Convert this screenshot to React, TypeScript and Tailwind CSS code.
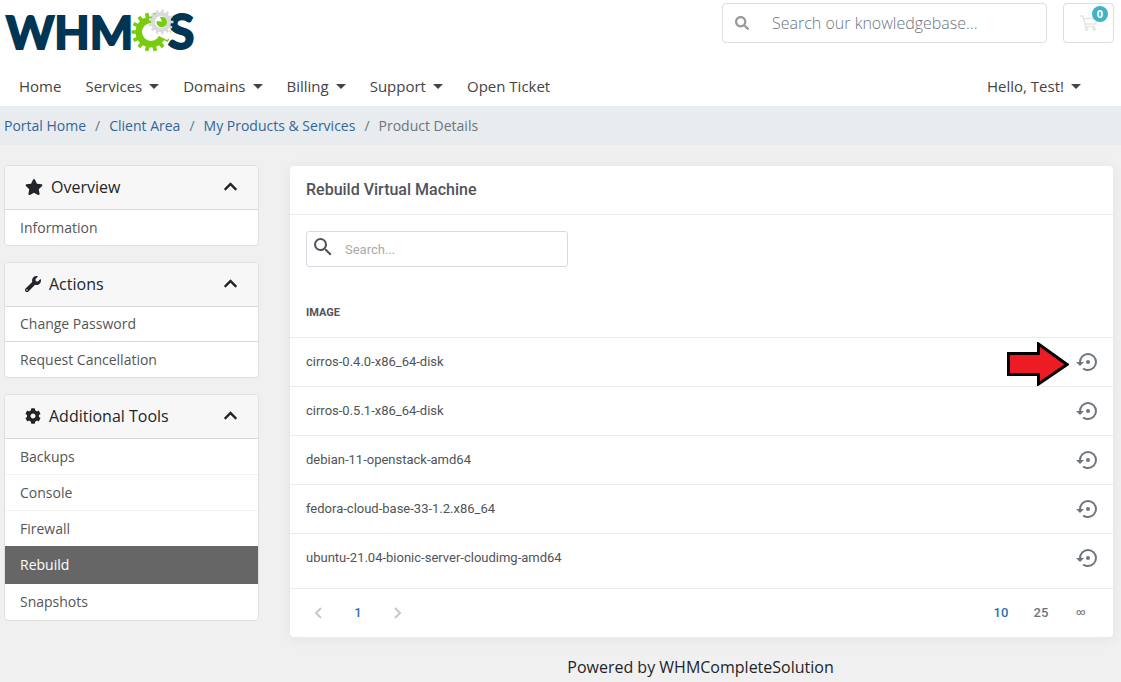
import React from "react";
import { FaSearch, FaStar, FaWrench, FaCog, FaChevronUp } from "react-icons/fa";

const RESTORE =
  "M12,3A9,9 0 0,0 3,12H0L4,16L8,12H5A7,7 0 0,1 12,5A7,7 0 0,1 19,12A7,7 0 0,1 12,19C10.5,19 9.09,18.5 7.94,17.7L6.5,19.14C8.04,20.3 9.94,21 12,21A9,9 0 0,0 21,12A9,9 0 0,0 12,3M14,12A2,2 0 0,0 12,10A2,2 0 0,0 10,12A2,2 0 0,0 12,14A2,2 0 0,0 14,12Z";
const MAGNIFY =
  "M9.5,3A6.5,6.5 0 0,1 16,9.5C16,11.11 15.41,12.59 14.44,13.73L14.71,14H15.5L20.5,19L19,20.5L14,15.5V14.71L13.73,14.44C12.59,15.41 11.11,16 9.5,16A6.5,6.5 0 0,1 3,9.5A6.5,6.5 0 0,1 9.5,3M9.5,5C7,5 5,7 5,9.5C5,12 7,14 9.5,14C12,14 14,12 14,9.5C14,7 12,5 9.5,5Z";

function gear(cx: number, cy: number, inner: number, outer: number, teeth: number) {
  const step = (Math.PI * 2) / teeth;
  const pts: string[] = [];
  for (let i = 0; i < teeth; i++) {
    const a = i * step;
    const corners: [number, number][] = [
      [-0.27, inner],
      [-0.2, outer],
      [0.2, outer],
      [0.27, inner],
    ];
    for (const [o, r] of corners) {
      pts.push(`${(cx + r * Math.cos(a + o * step)).toFixed(2)},${(cy + r * Math.sin(a + o * step)).toFixed(2)}`);
    }
  }
  return pts.join(" ");
}

function Logo() {
  return (
    <a href="#" aria-label="WHMCS" className="block">
      <svg width="200" height="60" viewBox="0 0 200 60" className="block">
        <g fill="#003553" stroke="#003553" strokeWidth="2" fontFamily="Lato" fontWeight="700">
          <text x="6" y="49" fontSize="46">WHM</text>
          <text x="168" y="49" fontSize="48">S</text>
        </g>
        <polygon points={gear(151, 32, 15.5, 19.5, 14)} fill="#77cc0b" />
        <circle cx="151" cy="32" r="9" fill="#fff" />
        <path d="M151 32 L167 40 L171 36 L167 20 Z" fill="#fff" />
        <polygon points={gear(161, 22, 10, 12.5, 13)} fill="#d9dadb" />
        <circle cx="161" cy="22" r="6" fill="#fff" />
        <path d="M162 21.5 L160 17 A5.3 5.3 0 1 1 156.5 21 Z" fill="#77cc0b" />
      </svg>
    </a>
  );
}

function Caret() {
  return <span className="border-x-[5px] border-t-[5px] border-x-transparent border-t-[#444]" />;
}

const NAV = [
  { label: "Home", menu: false },
  { label: "Services", menu: true },
  { label: "Domains", menu: true },
  { label: "Billing", menu: true },
  { label: "Support", menu: true },
  { label: "Open Ticket", menu: false },
];

function Header() {
  return (
    <header className="bg-white">
      <div className="flex h-[60px] items-start justify-between pr-[7px]">
        <Logo />
        <div className="flex gap-4 pt-[3px]">
          <label className="flex h-10 w-[325px] items-center rounded border border-[#ddd] pl-3">
            <FaSearch className="size-[14px] shrink-0 text-[#999]" />
            <input
              type="text"
              aria-label="Search our knowledgebase"
              placeholder="Search our knowledgebase..."
              className="ml-[23px] min-w-0 flex-1 bg-transparent text-base font-light outline-none placeholder:text-[#6c757d]"
            />
          </label>
          <button aria-label="Cart" className="relative flex h-10 w-[51px] items-center justify-center rounded border border-[#ddd]">
            <svg viewBox="0 0 18 16" className="h-4 w-[18px]" fill="none" stroke="#e6e6e6" strokeWidth="1.6">
              <path d="M0 1H3L5.5 11.5H15M3.5 3.5H17L15.5 9H5" />
              <circle cx="6.5" cy="14" r="1.2" />
              <circle cx="14" cy="14" r="1.2" />
            </svg>
            <span className="absolute top-[2px] right-[5px] flex size-4 items-center justify-center rounded-full bg-[#41b3c5] text-[11px] font-bold text-white">
              0
            </span>
          </button>
        </div>
      </div>
      <nav className="flex h-[46px] items-center justify-between pt-[7px] pr-10 pl-[19px] text-[15px] text-[#444]">
        <ul className="flex items-center gap-6">
          {NAV.map((n) => (
            <li key={n.label}>
              <a href="#" className="flex items-center gap-[7px]">
                {n.label}
                {n.menu && <Caret />}
              </a>
            </li>
          ))}
        </ul>
        <a href="#" className="flex items-center gap-[7px]">
          Hello, Test!
          <Caret />
        </a>
      </nav>
    </header>
  );
}

function Breadcrumb() {
  return (
    <nav aria-label="Breadcrumb" className="h-[39px] bg-[#e8ecef] px-1 text-sm leading-[39px] text-[#6c757d]">
      <ol className="flex gap-[9px]">
        {["Portal Home", "Client Area", "My Products & Services"].map((t) => (
          <li key={t} className="flex gap-[9px]">
            <a href="#" className="text-[#336699]">{t}</a>
            <span>/</span>
          </li>
        ))}
        <li>Product Details</li>
      </ol>
    </nav>
  );
}

type PanelProps = { title: string; icon: React.ReactNode; children: React.ReactNode };

function Panel({ title, icon, children }: PanelProps) {
  return (
    <section className="overflow-hidden rounded border border-[#dfdfdf] bg-white">
      <button className="flex h-11 w-full items-center gap-2 border-b border-[#d8d8d8] bg-[#f7f7f7] px-5 pb-[2px] text-base text-[#212529]">
        {icon}
        <span>{title}</span>
        <FaChevronUp className="ml-auto size-[15px]" />
      </button>
      <ul className="text-sm text-[#555]">{children}</ul>
    </section>
  );
}

function Sidebar() {
  return (
    <aside className="flex w-[255px] shrink-0 flex-col gap-4">
      <Panel title="Overview" icon={<FaStar className="h-4 w-[18px]" />}>
        <li><a href="#" className="block px-[15px] leading-[35px]">Information</a></li>
      </Panel>
      <Panel title="Actions" icon={<FaWrench className="size-4" />}>
        <li className="border-b border-[#d8d8d8]"><a href="#" className="block px-[15px] leading-[34px]">Change Password</a></li>
        <li><a href="#" className="block px-[15px] leading-[35px]">Request Cancellation</a></li>
      </Panel>
      <Panel title="Additional Tools" icon={<FaCog className="size-4" />}>
        <li className="border-b border-[#f2f2f2]"><a href="#" className="block px-[15px] leading-[35px]">Backups</a></li>
        <li className="border-b border-[#f2f2f2]"><a href="#" className="block px-[15px] leading-[35px]">Console</a></li>
        <li><a href="#" className="block px-[15px] leading-[35px]">Firewall</a></li>
        <li><a href="#" aria-current="page" className="block bg-[#666] px-[15px] leading-[38px] font-medium text-white">Rebuild</a></li>
        <li><a href="#" className="block px-[15px] leading-[36px]">Snapshots</a></li>
      </Panel>
    </aside>
  );
}

const IMAGES = [
  "cirros-0.4.0-x86_64-disk",
  "cirros-0.5.1-x86_64-disk",
  "debian-11-openstack-amd64",
  "fedora-cloud-base-33-1.2.x86_64",
  "ubuntu-21.04-bionic-server-cloudimg-amd64",
];

function Arrow() {
  return (
    <svg viewBox="0 0 62 44" className="absolute -top-2 right-[31px] h-11 w-[62px]" aria-hidden="true">
      <path d="M1.5 11.5H31.5V2L60 22.5L31.5 42V32.5H1.5Z" fill="#ed1c24" stroke="#000" strokeWidth="3" />
    </svg>
  );
}

function Card() {
  return (
    <main className="mt-px min-w-0 flex-1 rounded bg-white font-[Roboto,sans-serif] text-[#505459] shadow-[0_2px_0_#e9e9ee,0_2px_14px_rgba(0,0,0,0.06)]">
      <h1 className="border-b border-[#e9ebf0] px-4 text-base leading-12 font-medium">Rebuild Virtual Machine</h1>
      <div className="px-4 pt-4">
        <label className="flex h-9 w-[262px] items-center rounded-[3px] border border-[#d9d9e6] pl-1">
          <svg viewBox="0 0 24 24" className="mb-1 size-6 shrink-0" fill="currentColor"><path d={MAGNIFY} /></svg>
          <input
            type="text"
            aria-label="Search"
            placeholder="Search..."
            className="ml-[10px] min-w-0 flex-1 bg-transparent pt-[2px] text-[13px] outline-none placeholder:text-[#aaa]"
          />
        </label>
      </div>
      <table className="mt-[19px] w-full text-[13px]">
        <thead>
          <tr className="h-[51px] border-b border-[#ebebef]">
            <th className="px-4 pt-1 text-left text-[11px] font-bold">IMAGE</th>
            <th />
          </tr>
        </thead>
        <tbody>
          {IMAGES.map((name, i) => (
            <tr key={name} className="h-[49px] border-b border-[#ebebef] last:border-0">
              <td className="px-4">{name}</td>
              <td className="pr-[13px]">
                <div className="relative flex justify-end">
                  <button aria-label={`Rebuild from ${name}`} className="text-[#6f757c]">
                    <svg viewBox="0 0 24 24" className="block size-6" fill="currentColor"><path d={RESTORE} /></svg>
                  </button>
                  {i === 0 && <Arrow />}
                </div>
              </td>
            </tr>
          ))}
        </tbody>
      </table>
      <div className="mt-[6px] flex h-[49px] items-center justify-between border-t border-[#e9ebf0] px-2 text-[13px] font-medium text-[#6f757c]">
        <div className="flex text-[#c8c8c8]">
          <button aria-label="Previous page" className="flex w-10 items-center justify-center">
            <svg viewBox="0 0 8 12" className="h-3 w-2" fill="none" stroke="currentColor" strokeWidth="2"><path d="M7 1L2 6L7 11" /></svg>
          </button>
          <button className="w-10 text-[#2a6fb0]">1</button>
          <button aria-label="Next page" className="flex w-10 items-center justify-center">
            <svg viewBox="0 0 8 12" className="h-3 w-2" fill="none" stroke="currentColor" strokeWidth="2"><path d="M1 1L6 6L1 11" /></svg>
          </button>
        </div>
        <div className="flex pr-1">
          <button className="w-10 text-[#2a6fb0]">10</button>
          <button className="w-10">25</button>
          <button className="w-10 text-[9px]">∞</button>
        </div>
      </div>
    </main>
  );
}

export default function App() {
  return (
    <div className="min-h-screen bg-[#f0f0f0] font-['Open_Sans',sans-serif]">
      <Header />
      <Breadcrumb />
      <div className="flex items-start gap-[31px] pt-5 pr-2 pl-1">
        <Sidebar />
        <Card />
      </div>
      <footer className="pt-[18px] pr-2 pl-[288px] text-center text-base text-[#212529]">
        Powered by <a href="#">WHMCompleteSolution</a>
      </footer>
    </div>
  );
}
